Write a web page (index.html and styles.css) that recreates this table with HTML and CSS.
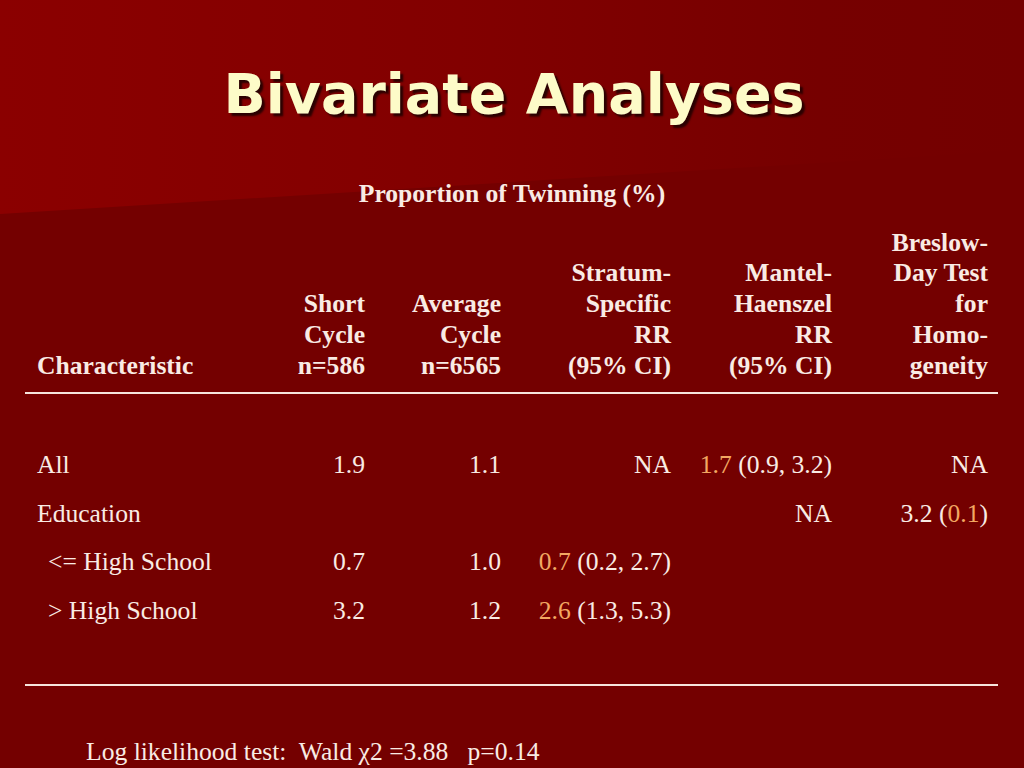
FILE: index.html
```html
<!DOCTYPE html>
<html>
<head>
<meta charset="utf-8">
<link rel="stylesheet" href="styles.css">
</head>
<body>
<div class="slide">
  <h1 class="title">Bivariate Analyses</h1>
  <div class="caption">Proportion of Twinning (%)</div>
  <div class="table">
    <div class="head">
      <div class="cell first">Characteristic</div>
      <div class="cell num">Short<br>Cycle<br>n=586</div>
      <div class="cell num">Average<br>Cycle<br>n=6565</div>
      <div class="cell num">Stratum-<br>Specific<br>RR<br>(95% CI)</div>
      <div class="cell num">Mantel-<br>Haenszel<br>RR<br>(95% CI)</div>
      <div class="cell num">Breslow-<br>Day Test<br>for<br>Homo-<br>geneity</div>
    </div>
    <div class="body">
      <div class="row">
        <div class="cell first">All</div>
        <div class="cell num">1.9</div>
        <div class="cell num">1.1</div>
        <div class="cell num">NA</div>
        <div class="cell num"><span class="hl">1.7</span> (0.9, 3.2)</div>
        <div class="cell num">NA</div>
      </div>
      <div class="row">
        <div class="cell first">Education</div>
        <div class="cell num"></div>
        <div class="cell num"></div>
        <div class="cell num"></div>
        <div class="cell num">NA</div>
        <div class="cell num">3.2 (<span class="hl">0.1</span>)</div>
      </div>
      <div class="row">
        <div class="cell first sub">&lt;= High School</div>
        <div class="cell num">0.7</div>
        <div class="cell num">1.0</div>
        <div class="cell num"><span class="hl">0.7</span> (0.2, 2.7)</div>
        <div class="cell num"></div>
        <div class="cell num"></div>
      </div>
      <div class="row">
        <div class="cell first sub">&gt; High School</div>
        <div class="cell num">3.2</div>
        <div class="cell num">1.2</div>
        <div class="cell num"><span class="hl">2.6</span> (1.3, 5.3)</div>
        <div class="cell num"></div>
        <div class="cell num"></div>
      </div>
    </div>
  </div>
  <div class="footer">Log likelihood test:  Wald χ2 =3.88   p=0.14</div>
</div>
</body>
</html>
```

FILE: styles.css
```css
html, body {
  margin: 0;
  padding: 0;
}
body {
  width: 1024px;
  height: 768px;
  overflow: hidden;
  background: #740000;
}
.slide {
  position: relative;
  width: 1024px;
  height: 768px;
  font-family: "Liberation Serif", "Times New Roman", serif;
  font-size: 25.6px;
  line-height: 30.72px;
  color: #f9ebe4;
}
.slide::before {
  content: "";
  position: absolute;
  left: 0;
  top: 0;
  width: 1024px;
  height: 214px;
  background: linear-gradient(to right, #8b0000 0%, #820000 45%, #760000 80%, #740000 100%);
  clip-path: polygon(0 0, 100% 0, 100% 150px, 0 214px);
  z-index: 0;
}
.title, .caption, .table, .footer {
  position: relative;
  z-index: 1;
}
.title {
  margin: 0;
  padding-top: 60px;
  padding-left: 4px;
  text-align: center;
  font-family: "DejaVu Sans", sans-serif;
  font-weight: bold;
  font-size: 55.5px;
  line-height: 68px;
  color: #fdfbc8;
  text-shadow: 3px 3px 2px #2b0000;
}
.caption {
  margin-top: 51px;
  text-align: center;
  font-weight: bold;
}
.table {
  margin-top: 18px;
  margin-left: 25px;
  width: 973px;
}
.head, .row {
  display: grid;
  grid-template-columns: 228px 112px 136px 170px 161px 156px;
  padding-right: 10px;
}
.head {
  align-items: end;
  font-weight: bold;
  padding-bottom: 11px;
  border-bottom: 2px solid #f6e4dc;
}
.body {
  padding-top: 47px;
  padding-bottom: 49px;
  border-bottom: 2px solid #f6e4dc;
}
.row {
  padding-top: 9px;
  padding-bottom: 8.8px;
}
.cell.first {
  padding-left: 12px;
  white-space: nowrap;
}
.cell.sub {
  padding-left: 23px;
}
.cell.num {
  text-align: right;
  white-space: nowrap;
}
.hl {
  color: #f2a862;
}
.footer {
  margin-top: 51px;
  padding-left: 86px;
  white-space: pre;
}
```
